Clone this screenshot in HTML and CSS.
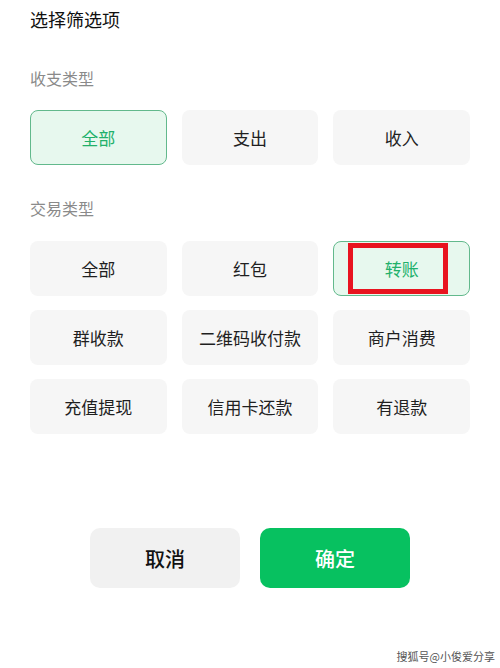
FILE: index.html
```html
<!DOCTYPE html>
<html lang="zh-CN">
<head>
  <meta charset="UTF-8">
  <title>选择筛选项</title>
  <link rel="stylesheet" href="styles.css">
</head>
<body>
  <div class="sheet">
    <div class="title">选择筛选项</div>

    <div class="section-label first">收支类型</div>
    <div class="options">
      <div class="option active">全部</div>
      <div class="option">支出</div>
      <div class="option">收入</div>
    </div>

    <div class="section-label">交易类型</div>
    <div class="options">
      <div class="option">全部</div>
      <div class="option">红包</div>
      <div class="option active marked">转账</div>
      <div class="option">群收款</div>
      <div class="option">二维码收付款</div>
      <div class="option">商户消费</div>
      <div class="option">充值提现</div>
      <div class="option">信用卡还款</div>
      <div class="option">有退款</div>
    </div>

    <div class="actions">
      <button class="btn cancel">取消</button>
      <button class="btn confirm">确定</button>
    </div>
  </div>

  <div class="watermark">搜狐号@小俊爱分享</div>
</body>
</html>
```

FILE: styles.css
```css
*, *::before, *::after { box-sizing: border-box; }
body {
  margin: 0;
  width: 500px;
  height: 668px;
  position: relative;
  background-color: #ffffff;
  font-family: "Noto Sans CJK SC", "Noto Sans", sans-serif;
  color: #1a1a1a;
  overflow: hidden;
}
.sheet {
  padding: 6px 30px 0 30px;
}
.title {
  font-size: 18px;
  line-height: 26px;
  color: #111;
}
.section-label {
  font-size: 16px;
  line-height: 22px;
  color: #8a8a8a;
  margin-top: 32px;
  margin-bottom: 22px;
}
.section-label.first {
  margin-top: 35px;
  margin-bottom: 21px;
}
.options {
  display: grid;
  grid-template-columns: repeat(3, 1fr);
  column-gap: 15px;
  row-gap: 14px;
}
.option {
  position: relative;
  height: 55px;
  display: flex;
  align-items: center;
  justify-content: center;
  background-color: #f6f6f6;
  border-radius: 8px;
  font-size: 17px;
  color: #1f1f1f;
}
.option.active {
  background-color: #e7f8ee;
  border: 1px solid #62b98c;
  color: #21b06a;
}
.option.marked::after {
  content: "";
  position: absolute;
  left: 14px;
  top: 1px;
  width: 100px;
  height: 51px;
  border: 5px solid #e8141f;
}
.actions {
  display: flex;
  justify-content: center;
  gap: 20px;
  margin-top: 94px;
}
.btn {
  width: 150px;
  height: 60px;
  border: none;
  border-radius: 10px;
  font-family: inherit;
  font-size: 20px;
  font-weight: 500;
}
.cancel {
  background-color: #f1f1f1;
  color: #111;
}
.confirm {
  background-color: #07c160;
  color: #ffffff;
}
.watermark {
  position: absolute;
  right: 5px;
  bottom: 4px;
  font-size: 11px;
  color: #555;
  text-shadow: 0 0 1px #fff;
}
```
